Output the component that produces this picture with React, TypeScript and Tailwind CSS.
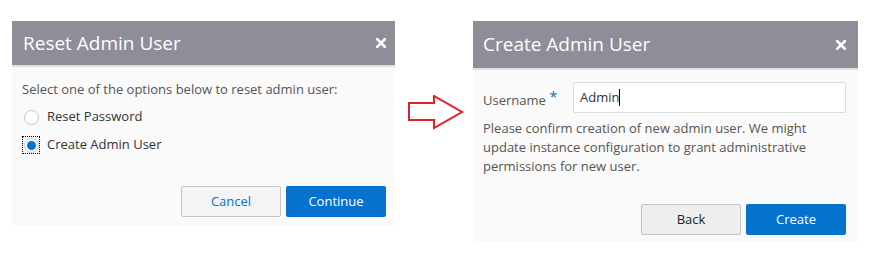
import * as React from 'react';

const font = { fontFamily: '"Open Sans", "Noto Sans", sans-serif' };

function CloseX() {
  return (
    <svg width="10" height="10" viewBox="0 0 10 10" className="shrink-0">
      <path d="M1 1L9 9M9 1L1 9" stroke="white" strokeWidth="2.6" strokeLinecap="square" />
    </svg>
  );
}

function Radio({ checked, label }: { checked?: boolean; label: string }) {
  return (
    <div className="flex items-center h-[28px]">
      <div className={checked ? 'w-[18px] h-[18px] flex items-center justify-center border border-dotted border-black' : 'w-[18px] h-[18px] flex items-center justify-center'}>
        <div className="w-[15px] h-[15px] rounded-full border border-[#c8c8c8] bg-white flex items-center justify-center">
          {checked && <div className="w-[9px] h-[9px] rounded-full bg-[#0572ce]" />}
        </div>
      </div>
      <span className="ml-[7px] text-[13px] text-[#333]">{label}</span>
    </div>
  );
}

function Arrow() {
  return (
    <svg width="58" height="36" viewBox="0 0 58 36" className="mt-[74px] ml-[13px] shrink-0">
      <path d="M1 8H26V1L54 17L26 33V25H1Z" fill="none" stroke="#e41e26" strokeWidth="2" />
    </svg>
  );
}

export default function App() {
  return (
    <div className="w-[880px] h-[277px] bg-white flex items-start pt-[21px] pl-[12px]" style={font}>
      <div className="w-[383px] bg-[#fafafa] shrink-0">
        <div className="h-[46px] bg-[#8e8d98] border-b-2 border-[#e0e0e4] flex items-center justify-between pl-[11px] pr-[9px]">
          <span className="text-[19px] text-white">Reset Admin User</span>
          <CloseX />
        </div>
        <div className="pl-[10px] pt-[13px] pr-[9px] pb-[9px]">
          <p className="text-[13px] text-[#555] leading-[18px]">Select one of the options below to reset admin user:</p>
          <div className="mt-[5px]">
            <Radio label="Reset Password" />
            <Radio checked label="Create Admin User" />
          </div>
          <div className="flex justify-end gap-[5px] mt-[27px]">
            <button className="w-[100px] h-[31px] bg-[#f4f4f4] border border-[#c4c4c4] rounded-[2px] text-[13px] text-[#0572ce]">Cancel</button>
            <button className="w-[100px] h-[31px] bg-[#0572ce] rounded-[2px] text-[13px] text-white">Continue</button>
          </div>
        </div>
      </div>

      <Arrow />

      <div className="w-[385px] bg-[#fafafa] shrink-0 ml-[7px]">
        <div className="h-[49px] bg-[#8e8d98] border-b-2 border-[#e0e0e4] flex items-center justify-between pl-[10px] pr-[12px]">
          <span className="text-[19px] text-white">Create Admin User</span>
          <CloseX />
        </div>
        <div className="pl-[10px] pt-[12px] pr-[12px] pb-[7px]">
          <div className="flex items-center">
            <span className="w-[90px] text-[13px] text-[#555]">
              Username <span className="text-[#0572ce] text-[15px] align-[3px]">*</span>
            </span>
            <div className="flex-1 h-[31px] bg-white border border-[#dcdcdc] rounded-[2px] flex items-center pl-[6px] text-[13px] text-[#333]">
              Admin<span className="inline-block w-px h-[17px] bg-black" />
            </div>
          </div>
          <p className="mt-[6px] text-[13px] text-[#555] leading-[19px]">
            Please confirm creation of new admin user. We might<br />
            update instance configuration to grant administrative<br />
            permissions for new user.
          </p>
          <div className="flex justify-end gap-[5px] mt-[28px]">
            <button className="w-[100px] h-[31px] bg-[#eeeeee] border border-[#c4c4c4] rounded-[2px] text-[13px] text-[#222]">Back</button>
            <button className="w-[100px] h-[31px] bg-[#0572ce] rounded-[2px] text-[13px] text-white">Create</button>
          </div>
        </div>
      </div>
    </div>
  );
}
